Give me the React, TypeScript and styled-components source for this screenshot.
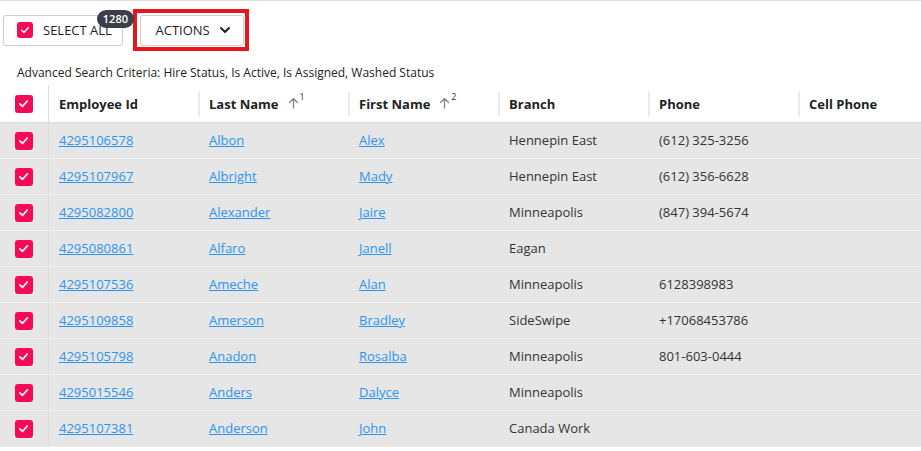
import React from 'react'
import styled, { createGlobalStyle } from 'styled-components'
import { ChevronDown } from 'lucide-react'

const GlobalStyle = createGlobalStyle`
    html, body {
        margin: 0;
        padding: 0;
        background: #ffffff;
        overflow: hidden;
    }
    body {
        font-family: "Open Sans", "Liberation Sans", sans-serif;
        color: #333333;
    }
`

const Page = styled.div`
    border-top: 1px solid #dddddd;
    width: 921px;
    overflow: hidden;
`
const Toolbar = styled.div`
    display: flex;
    align-items: center;
    gap: 10px;
    padding: 8px 0 0 3px;
`
const ButtonWrap = styled.div`
    position: relative;
`
const Button = styled.button`
    display: flex;
    align-items: center;
    box-sizing: border-box;
    height: 31px;
    padding: 0;
    gap: 10px;
    background: #ffffff;
    border: 1px solid #cccccc;
    border-radius: 3px;
    font-family: "Open Sans", "Liberation Sans", sans-serif;
    font-size: 13px;
    color: #222222;
    text-transform: uppercase;
    white-space: nowrap;
    cursor: pointer;
    svg {
        flex-shrink: 0;
    }
`
const SelectAllButton = styled(Button)`
    width: 120px;
    padding-left: 13px;
`
const ActionsButton = styled(Button)`
    width: 104px;
    padding-left: 15px;
    gap: 7px;
`
const Highlight = styled.div`
    border: 4px solid #e8161c;
    padding: 1.5px 1.5px 1.5px 2.5px;
`
const Badge = styled.span`
    position: absolute;
    top: -5px;
    right: -11px;
    height: 18px;
    padding: 0 6px;
    border-radius: 9px;
    background: #3b3f47;
    color: #ffffff;
    font-size: 11px;
    font-weight: 600;
    line-height: 18px;
`
const Criteria = styled.div`
    font-size: 12px;
    color: #222222;
    padding: 13px 0 0 17px;
    line-height: 17px;
`
const Table = styled.div`
    margin-top: 4px;
    width: 949px;
`
const Row = styled.div<{ $header?: boolean }>`
    display: grid;
    grid-template-columns: 49px repeat(6, 150px);
    height: ${p => (p.$header ? '38px' : '36px')};
    box-sizing: border-box;
    background: ${p => (p.$header ? '#ffffff' : '#e6e6e6')};
    border-bottom: 1px solid ${p => (p.$header ? '#dcdcdc' : '#efefef')};
`
const CheckCell = styled.div`
    display: flex;
    align-items: center;
    justify-content: center;
    border-right: 1px solid #dddddd;
    padding-right: 1px;
`
const Cell = styled.div`
    display: flex;
    align-items: center;
    padding: 0 0 1px 10px;
    font-size: 13px;
    color: #333333;
    white-space: nowrap;
`
const HeadCell = styled(Cell)<{ $divider?: boolean }>`
    position: relative;
    font-weight: 700;
    color: #222222;
    padding-bottom: 0;
    &::before {
        content: '';
        display: ${p => (p.$divider ? 'block' : 'none')};
        position: absolute;
        left: -1px;
        top: 7px;
        width: 2px;
        height: 24px;
        background: #ebebeb;
    }
`
const SortMark = styled.span`
    display: inline-flex;
    align-items: flex-start;
    margin-left: 9px;
    color: #8a8a8a;
`
const SortOrder = styled.sup`
    font-size: 9px;
    font-weight: 400;
    color: #333333;
    margin-left: 1px;
    position: relative;
    top: -7px;
`
const Link = styled.a`
    color: #2b95ee;
    text-decoration: underline;
    cursor: pointer;
`
const Box = styled.span<{ $size?: number }>`
    display: inline-flex;
    align-items: center;
    justify-content: center;
    width: ${p => p.$size ?? 18}px;
    height: ${p => p.$size ?? 18}px;
    border-radius: 3px;
    background: #f50a57;
    flex-shrink: 0;
`

const Check: React.FC<{ size?: number }> = ({ size = 18 }) => (
    <Box $size={size}>
        <svg width={size * 0.62} height={size * 0.62} viewBox="0 0 12 12" fill="none">
            <path d="M2 6.3 L4.8 9 L10 3.2" stroke="#ffffff" strokeWidth="1.8" strokeLinecap="round" strokeLinejoin="round" />
        </svg>
    </Box>
)

const ArrowUp: React.FC = () => (
    <svg width="11" height="12" viewBox="0 0 11 12" fill="none">
        <path d="M5.5 11 V1.5 M1.5 5.5 L5.5 1.5 L9.5 5.5" stroke="#8a8a8a" strokeWidth="1.4" strokeLinecap="round" strokeLinejoin="round" />
    </svg>
)

type Employee = {
    id: string
    last: string
    first: string
    branch: string
    phone: string
    cell: string
}

const employees: Employee[] = [
    { id: '4295106578', last: 'Albon', first: 'Alex', branch: 'Hennepin East', phone: '(612) 325-3256', cell: '' },
    { id: '4295107967', last: 'Albright', first: 'Mady', branch: 'Hennepin East', phone: '(612) 356-6628', cell: '' },
    { id: '4295082800', last: 'Alexander', first: 'Jaire', branch: 'Minneapolis', phone: '(847) 394-5674', cell: '' },
    { id: '4295080861', last: 'Alfaro', first: 'Janell', branch: 'Eagan', phone: '', cell: '' },
    { id: '4295107536', last: 'Ameche', first: 'Alan', branch: 'Minneapolis', phone: '6128398983', cell: '' },
    { id: '4295109858', last: 'Amerson', first: 'Bradley', branch: 'SideSwipe', phone: '+17068453786', cell: '' },
    { id: '4295105798', last: 'Anadon', first: 'Rosalba', branch: 'Minneapolis', phone: '801-603-0444', cell: '' },
    { id: '4295015546', last: 'Anders', first: 'Dalyce', branch: 'Minneapolis', phone: '', cell: '' },
    { id: '4295107381', last: 'Anderson', first: 'John', branch: 'Canada Work', phone: '', cell: '' },
]

const App: React.FC = () => {
    return (
        <Page>
            <GlobalStyle />
            <Toolbar>
                <ButtonWrap>
                    <SelectAllButton>
                        <Check size={16} />
                        Select All
                    </SelectAllButton>
                    <Badge>1280</Badge>
                </ButtonWrap>
                <Highlight>
                    <ActionsButton>
                        Actions
                        <ChevronDown size={16} strokeWidth={3} color="#222" />
                    </ActionsButton>
                </Highlight>
            </Toolbar>
            <Criteria>Advanced Search Criteria: Hire Status, Is Active, Is Assigned, Washed Status</Criteria>
            <Table>
                <Row $header>
                    <CheckCell>
                        <Check />
                    </CheckCell>
                    <HeadCell>Employee Id</HeadCell>
                    <HeadCell $divider>
                        Last Name
                        <SortMark>
                            <ArrowUp />
                            <SortOrder>1</SortOrder>
                        </SortMark>
                    </HeadCell>
                    <HeadCell $divider>
                        First Name
                        <SortMark>
                            <ArrowUp />
                            <SortOrder>2</SortOrder>
                        </SortMark>
                    </HeadCell>
                    <HeadCell $divider>Branch</HeadCell>
                    <HeadCell $divider>Phone</HeadCell>
                    <HeadCell $divider>Cell Phone</HeadCell>
                </Row>
                {employees.map(e => (
                    <Row key={e.id}>
                        <CheckCell>
                            <Check />
                        </CheckCell>
                        <Cell><Link>{e.id}</Link></Cell>
                        <Cell><Link>{e.last}</Link></Cell>
                        <Cell><Link>{e.first}</Link></Cell>
                        <Cell>{e.branch}</Cell>
                        <Cell>{e.phone}</Cell>
                        <Cell>{e.cell}</Cell>
                    </Row>
                ))}
            </Table>
        </Page>
    )
}

export default App
